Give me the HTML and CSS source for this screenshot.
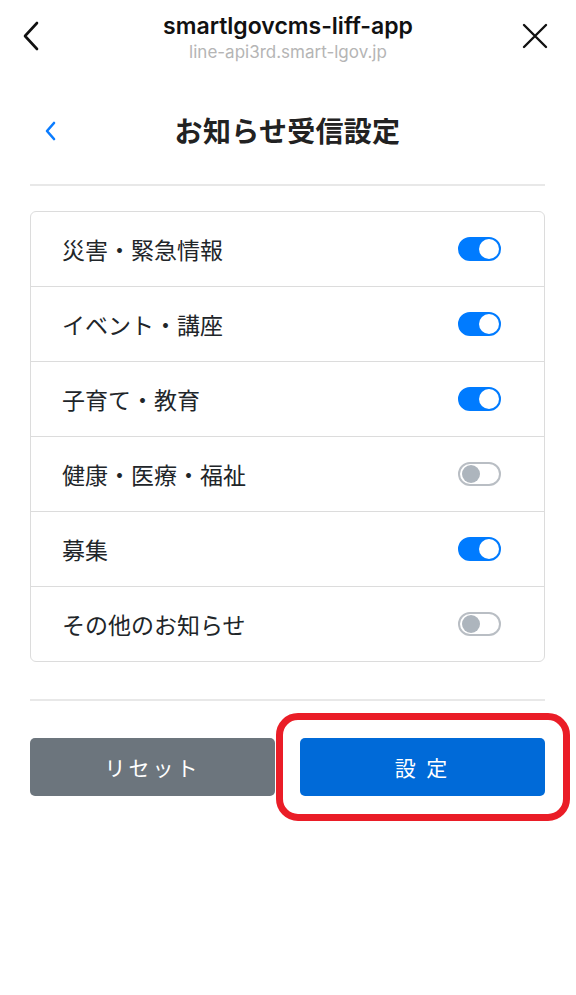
FILE: index.html
```html
<!DOCTYPE html>
<html lang="ja">
<head>
    <meta charset="UTF-8">
    <meta name="viewport" content="width=device-width, initial-scale=1.0">
    <title>お知らせ受信設定</title>
    <link rel="stylesheet" href="styles.css">
</head>
<body>

<div class="topbar">
    <svg class="top-icon" width="20" height="30" viewBox="0 0 20 30">
        <path d="M16 2 L4 15 L16 28" fill="none" stroke="#111" stroke-width="2.6" stroke-linecap="round" stroke-linejoin="round"/>
    </svg>
    <div class="top-title">
        <div class="app-name">smartlgovcms-liff-app</div>
        <div class="app-host">line-api3rd.smart-lgov.jp</div>
    </div>
    <svg class="top-icon right" width="26" height="26" viewBox="0 0 26 26">
        <path d="M2 2 L24 24 M24 2 L2 24" fill="none" stroke="#111" stroke-width="2.4" stroke-linecap="round"/>
    </svg>
</div>

<div class="content">
    <div class="page-head">
        <svg class="back" width="14" height="20" viewBox="0 0 14 20">
            <path d="M10 2 L3 10 L10 18" fill="none" stroke="#0a7cff" stroke-width="2.6" stroke-linecap="round" stroke-linejoin="round"/>
        </svg>
        <h1>お知らせ受信設定</h1>
    </div>
    <hr class="rule">

    <ul class="settings">
        <li><span>災害・緊急情報</span><span class="switch on"></span></li>
        <li><span>イベント・講座</span><span class="switch on"></span></li>
        <li><span>子育て・教育</span><span class="switch on"></span></li>
        <li><span>健康・医療・福祉</span><span class="switch"></span></li>
        <li><span>募集</span><span class="switch on"></span></li>
        <li><span>その他のお知らせ</span><span class="switch"></span></li>
    </ul>

    <hr class="rule lower">

    <div class="actions">
        <div class="slot">
            <button class="btn reset">リセット</button>
        </div>
        <div class="slot highlight">
            <button class="btn submit">設 定</button>
        </div>
    </div>
</div>

</body>
</html>
```

FILE: styles.css
```css
html, body {
    background: #fff;
}
body {
    margin: 0;
    min-height: 995px;
    color: #212529;
    font-family: Inter, "Noto Sans CJK JP", sans-serif;
}
.topbar {
    display: grid;
    grid-template-columns: 60px 1fr 60px;
    align-items: center;
    height: 76px;
}
.top-icon {
    margin-left: 21px;
    margin-top: -4px;
}
.top-icon.right {
    margin-left: 6px;
}
.top-title {
    text-align: center;
    margin-top: -2px;
}
.app-name {
    font-size: 23px;
    font-weight: 600;
    color: #111;
    line-height: 28px;
}
.app-host {
    font-size: 17px;
    color: #b5b5b5;
    line-height: 22px;
    margin-top: 1px;
}
.content {
    padding: 0 31px 60px 30px;
}
.page-head {
    height: 108px;
    display: flex;
    align-items: center;
    justify-content: center;
    position: relative;
}
.page-head .back {
    position: absolute;
    left: 14px;
    top: 45px;
}
.page-head h1 {
    margin: 0;
    font-size: 28px;
    font-weight: 700;
    color: #222;
    letter-spacing: 0.3px;
}
.rule {
    border: none;
    border-top: 2px solid #e8e8e8;
    margin: 0;
}
.rule.lower {
    margin-top: 37px;
}
.settings {
    list-style: none;
    margin: 25px 0 0;
    padding: 0;
    border: 1px solid #dcdcdc;
    border-radius: 6px;
}
.settings li {
    height: 74px;
    display: flex;
    align-items: center;
    justify-content: space-between;
    padding: 0 43px 0 31px;
    font-size: 23px;
    border-bottom: 1px solid #dcdcdc;
}
.settings li:last-child {
    border-bottom: none;
}
.switch {
    width: 39px;
    height: 20px;
    border-radius: 12px;
    border: 2px solid #b9bec4;
    background: #fff;
    position: relative;
    display: block;
}
.switch::after {
    content: "";
    position: absolute;
    left: 2px;
    top: 1px;
    width: 18px;
    height: 18px;
    border-radius: 50%;
    background: #adb5bd;
}
.switch.on {
    background: #007bff;
    border-color: #007bff;
}
.switch.on::after {
    left: auto;
    right: 0;
    top: 0;
    width: 20px;
    height: 20px;
    background: #fff;
}
.actions {
    display: flex;
    gap: 25px;
    margin-top: 37px;
}
.slot {
    flex: 1 1 0;
    min-width: 0;
    display: flex;
}
.btn {
    flex: 1;
    height: 58px;
    border: none;
    border-radius: 5px;
    color: #fff;
    font-family: "Noto Sans CJK JP", sans-serif;
    font-size: 21px;
    letter-spacing: 3px;
}
.btn.reset {
    background: #6c757d;
}
.btn.submit {
    background: #006ad8;
}
.highlight {
    position: relative;
}
.highlight::after {
    content: "";
    position: absolute;
    left: -24px;
    right: -25px;
    top: -25px;
    bottom: -25px;
    border: 7px solid #ea1d27;
    border-radius: 22px;
    pointer-events: none;
}
```
